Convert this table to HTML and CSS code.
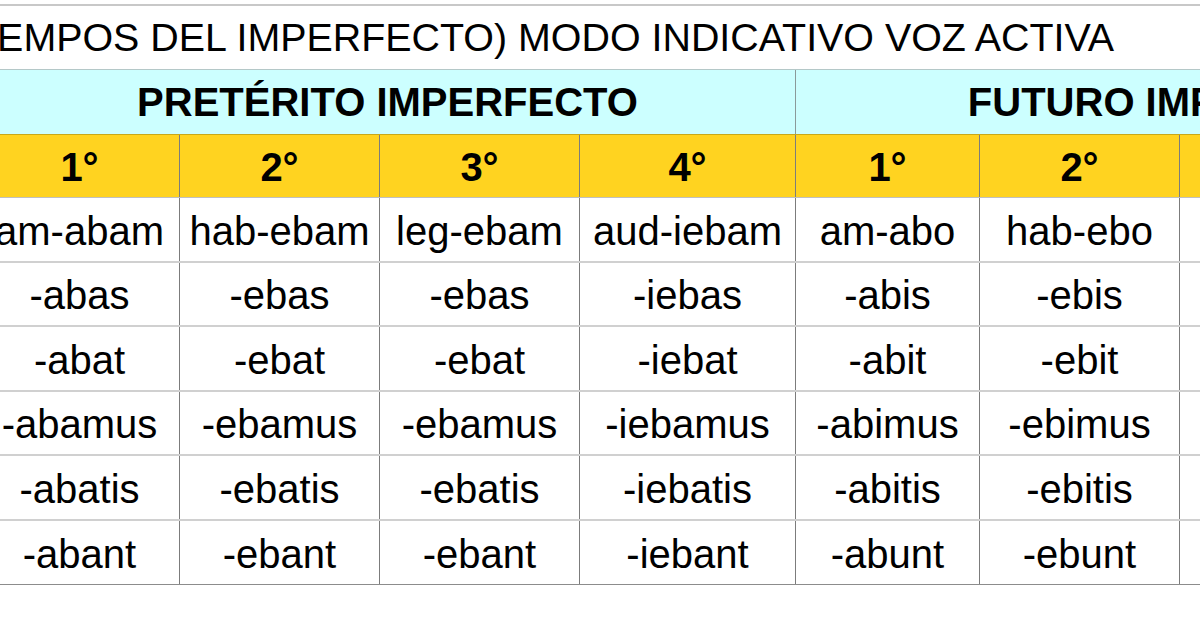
FILE: index.html
```html
<!DOCTYPE html>
<html lang="es">
<head>
<meta charset="utf-8">
<title>Tiempos del imperfecto</title>
<link rel="stylesheet" href="styles.css">
</head>
<body>
<div class="sheet">
  <div class="title">(TIEMPOS DEL IMPERFECTO) MODO INDICATIVO VOZ ACTIVA</div>
  <div class="band">
    <div class="band-cell span4">PRETÉRITO IMPERFECTO</div>
    <div class="band-cell span4">FUTURO IMPERFECTO</div>
  </div>
  <div class="row head">
    <div class="cell">1°</div><div class="cell">2°</div><div class="cell">3°</div><div class="cell">4°</div>
    <div class="cell">1°</div><div class="cell">2°</div><div class="cell">3°</div><div class="cell">4°</div>
  </div>
  <div class="row data tall">
    <div class="cell">am-abam</div><div class="cell">hab-ebam</div><div class="cell">leg-ebam</div><div class="cell">aud-iebam</div>
    <div class="cell">am-abo</div><div class="cell">hab-ebo</div><div class="cell">leg-am</div><div class="cell">aud-iam</div>
  </div>
  <div class="row data">
    <div class="cell">-abas</div><div class="cell">-ebas</div><div class="cell">-ebas</div><div class="cell">-iebas</div>
    <div class="cell">-abis</div><div class="cell">-ebis</div><div class="cell">-es</div><div class="cell">-ies</div>
  </div>
  <div class="row data tall">
    <div class="cell">-abat</div><div class="cell">-ebat</div><div class="cell">-ebat</div><div class="cell">-iebat</div>
    <div class="cell">-abit</div><div class="cell">-ebit</div><div class="cell">-et</div><div class="cell">-iet</div>
  </div>
  <div class="row data">
    <div class="cell">-abamus</div><div class="cell">-ebamus</div><div class="cell">-ebamus</div><div class="cell">-iebamus</div>
    <div class="cell">-abimus</div><div class="cell">-ebimus</div><div class="cell">-emus</div><div class="cell">-iemus</div>
  </div>
  <div class="row data tall">
    <div class="cell">-abatis</div><div class="cell">-ebatis</div><div class="cell">-ebatis</div><div class="cell">-iebatis</div>
    <div class="cell">-abitis</div><div class="cell">-ebitis</div><div class="cell">-etis</div><div class="cell">-ietis</div>
  </div>
  <div class="row data last">
    <div class="cell">-abant</div><div class="cell">-ebant</div><div class="cell">-ebant</div><div class="cell">-iebant</div>
    <div class="cell">-abunt</div><div class="cell">-ebunt</div><div class="cell">-ent</div><div class="cell">-ient</div>
  </div>
</div>
</body>
</html>
```
FILE: styles.css
```css
html, body {
  margin: 0;
  padding: 0;
  background: #ffffff;
  overflow: hidden;
  width: 1200px;
  height: 630px;
}

.sheet {
  margin-left: -20px;
  padding-top: 4px;
  width: 1600px;
  font-family: "Liberation Sans", Arial, sans-serif;
  color: #000;
}

.title {
  box-sizing: border-box;
  height: 65px;
  border-top: 2px solid #c8c8c8;
  font-size: 39.4px;
  line-height: 63px;
  white-space: nowrap;
  text-indent: -31px;
}

.band,
.row {
  display: grid;
  grid-template-columns: 200px 200px 200px 216px 184px 200px 200px 200px;
}

.band {
  height: 65px;
  background: #ccffff;
  border-top: 1px solid #b4c8c8;
  box-sizing: border-box;
}

.band-cell {
  grid-column: span 4;
  font-weight: bold;
  font-size: 40px;
  line-height: 64px;
  text-align: center;
  border-right: 1px solid #8a9a9a;
  white-space: nowrap;
}

.row {
  box-sizing: border-box;
  height: 64px;
}

.row.tall {
  height: 65px;
}

.cell {
  box-sizing: border-box;
  border-right: 1px solid #7c7c7c;
  text-align: center;
  white-space: nowrap;
  display: flex;
  align-items: center;
  justify-content: center;
}

.head {
  background: #ffd320;
  border-top: 1px solid #c8a81a;
  border-bottom: 1px solid #c0c0c0;
  font-weight: bold;
  font-size: 40px;
}

.head .cell {
  padding-top: 2px;
}

.data {
  font-size: 40px;
  border-bottom: 2px solid #d0d0d0;
}

.data .cell {
  padding-top: 3px;
}

.data.last {
  border-bottom: 1px solid #8c8c8c;
}
```
